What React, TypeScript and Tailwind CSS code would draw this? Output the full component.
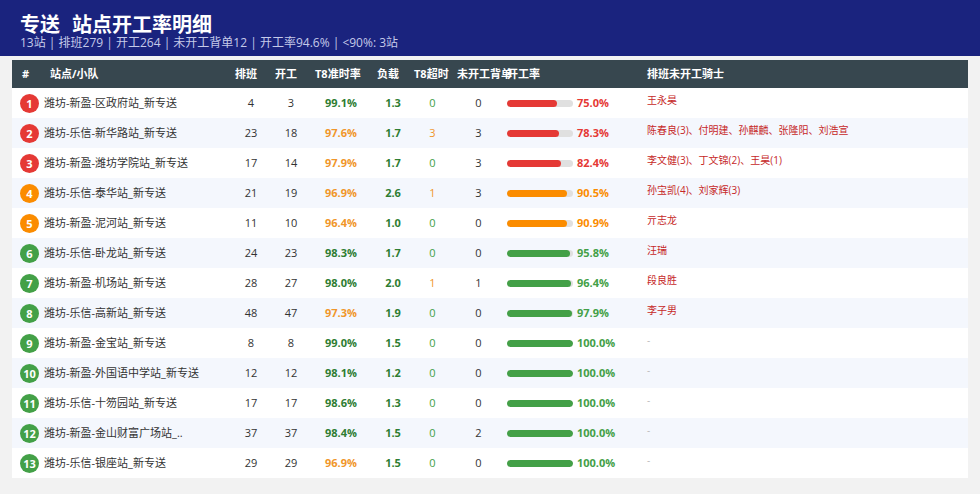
type Row = {
  rank: number;
  name: string;
  shifts: number;
  started: number;
  t8Rate: number;
  load: number;
  t8Late: number;
  backlog: number;
  rate: number;
  riders: string;
};

const ROWS: Row[] = [
  { rank: 1, name: '潍坊-新盈-区政府站_新专送', shifts: 4, started: 3, t8Rate: 99.1, load: 1.3, t8Late: 0, backlog: 0, rate: 75.0, riders: '王永昊' },
  { rank: 2, name: '潍坊-乐信-新华路站_新专送', shifts: 23, started: 18, t8Rate: 97.6, load: 1.7, t8Late: 3, backlog: 3, rate: 78.3, riders: '陈春良(3)、付明建、孙麒麟、张隆阳、刘浩宣' },
  { rank: 3, name: '潍坊-新盈-潍坊学院站_新专送', shifts: 17, started: 14, t8Rate: 97.9, load: 1.7, t8Late: 0, backlog: 3, rate: 82.4, riders: '李文健(3)、丁文锦(2)、王昊(1)' },
  { rank: 4, name: '潍坊-乐信-泰华站_新专送', shifts: 21, started: 19, t8Rate: 96.9, load: 2.6, t8Late: 1, backlog: 3, rate: 90.5, riders: '孙宝凯(4)、刘家辉(3)' },
  { rank: 5, name: '潍坊-新盈-泥河站_新专送', shifts: 11, started: 10, t8Rate: 96.4, load: 1.0, t8Late: 0, backlog: 0, rate: 90.9, riders: '亓志龙' },
  { rank: 6, name: '潍坊-乐信-卧龙站_新专送', shifts: 24, started: 23, t8Rate: 98.3, load: 1.7, t8Late: 0, backlog: 0, rate: 95.8, riders: '汪瑞' },
  { rank: 7, name: '潍坊-新盈-机场站_新专送', shifts: 28, started: 27, t8Rate: 98.0, load: 2.0, t8Late: 1, backlog: 1, rate: 96.4, riders: '段良胜' },
  { rank: 8, name: '潍坊-乐信-高新站_新专送', shifts: 48, started: 47, t8Rate: 97.3, load: 1.9, t8Late: 0, backlog: 0, rate: 97.9, riders: '李子男' },
  { rank: 9, name: '潍坊-新盈-金宝站_新专送', shifts: 8, started: 8, t8Rate: 99.0, load: 1.5, t8Late: 0, backlog: 0, rate: 100, riders: '' },
  { rank: 10, name: '潍坊-新盈-外国语中学站_新专送', shifts: 12, started: 12, t8Rate: 98.1, load: 1.2, t8Late: 0, backlog: 0, rate: 100, riders: '' },
  { rank: 11, name: '潍坊-乐信-十笏园站_新专送', shifts: 17, started: 17, t8Rate: 98.6, load: 1.3, t8Late: 0, backlog: 0, rate: 100, riders: '' },
  { rank: 12, name: '潍坊-新盈-金山财富广场站_..', shifts: 37, started: 37, t8Rate: 98.4, load: 1.5, t8Late: 0, backlog: 2, rate: 100, riders: '' },
  { rank: 13, name: '潍坊-乐信-银座站_新专送', shifts: 29, started: 29, t8Rate: 96.9, load: 1.5, t8Late: 0, backlog: 0, rate: 100, riders: '' },
];

const GRID = 'grid grid-cols-[30px_189px_40px_40px_60px_44px_35px_57px_133px_1fr]';

function rateTone(rate: number) {
  if (rate < 90) return { text: 'text-[#e53935]', bar: 'bg-[#e53935]' };
  if (rate < 95) return { text: 'text-[#fb8c00]', bar: 'bg-[#fb8c00]' };
  return { text: 'text-[#43a047]', bar: 'bg-[#43a047]' };
}

function RankBadge({ rank }: { rank: number }) {
  const color = rank <= 3 ? 'bg-[#e53935]' : rank <= 5 ? 'bg-[#fb8c00]' : 'bg-[#43a047]';
  return (
    <span className={`${color} w-[19px] h-[19px] rounded-full flex items-center justify-center text-white text-[11px] font-bold leading-none`}>
      {rank}
    </span>
  );
}

export default function App() {
  return (
    <div
      className="w-[980px] h-[494px] bg-[#f2f2f2] overflow-hidden"
      style={{ fontFamily: '"Open Sans", "Noto Sans CJK SC", sans-serif' }}
    >
      {/* Title bar */}
      <div className="h-[56px] bg-[#1a237e] px-5 pt-[14px]">
        <h1 className="text-white text-[20px] font-bold leading-[22px]">
          <span className="mr-3">专送</span>站点开工率明细
        </h1>
        <p className="text-[#c5cae9] text-[12px] leading-[14px]">
          13站 | 排班279 | 开工264 | 未开工背单12 | 开工率94.6% | &lt;90%: 3站
        </p>
      </div>

      <div className="mx-3 mt-1 bg-white">
        {/* Header */}
        <div className={`${GRID} h-[28px] items-center bg-[#37474f] text-white text-[11px] font-bold whitespace-nowrap`}>
          <div className="pl-[10px]">#</div>
          <div className="pl-[8px]">站点/小队</div>
          <div className="pl-[4px]">排班</div>
          <div className="pl-[4px]">开工</div>
          <div className="pl-[4px]">T8准时率</div>
          <div className="pl-[6px]">负载</div>
          <div className="-ml-[1px]">T8超时</div>
          <div className="pl-[7px] overflow-visible">未开工背单</div>
          <div>开工率</div>
          <div className="pl-[7px]">排班未开工骑士</div>
        </div>

        {/* Rows */}
        {ROWS.map((r, i) => {
          const tone = rateTone(r.rate);
          return (
            <div
              key={r.rank}
              className={`${GRID} h-[30px] text-[11px] text-[#333] ${i % 2 === 1 ? 'bg-[#f4f7fd]' : 'bg-white'}`}
            >
              <div className="flex items-center justify-end pr-[3px]">
                <RankBadge rank={r.rank} />
              </div>
              <div className="flex items-center pl-[2px] whitespace-nowrap">{r.name}</div>
              <div className="flex items-center justify-center">{r.shifts}</div>
              <div className="flex items-center justify-center">{r.started}</div>
              <div className={`flex items-center justify-center font-bold ${r.t8Rate >= 98 ? 'text-[#2e7d32]' : 'text-[#f0962a]'}`}>
                {r.t8Rate.toFixed(1)}%
              </div>
              <div className="flex items-center justify-center font-bold text-[#2e7d32]">{r.load.toFixed(1)}</div>
              <div className={`flex items-center justify-center ${r.t8Late > 0 ? 'text-[#f0962a]' : 'text-[#43a047]'}`}>
                {r.t8Late}
              </div>
              <div className="flex items-center justify-center">{r.backlog}</div>
              <div className="flex items-center gap-1">
                <div className="w-[66px] h-[7px] rounded-full bg-[#e0e0e0] overflow-hidden">
                  <div className={`h-full rounded-full ${tone.bar}`} style={{ width: `${r.rate}%` }} />
                </div>
                <span className={`font-bold ${tone.text}`}>{r.rate.toFixed(1)}%</span>
              </div>
              <div className="pl-[7px] pt-[5px] text-[10px] leading-[14px] whitespace-nowrap">
                {r.riders ? (
                  <span className="text-[#c62828]">{r.riders}</span>
                ) : (
                  <span className="text-[#bbb]">-</span>
                )}
              </div>
            </div>
          );
        })}
      </div>
    </div>
  );
}
